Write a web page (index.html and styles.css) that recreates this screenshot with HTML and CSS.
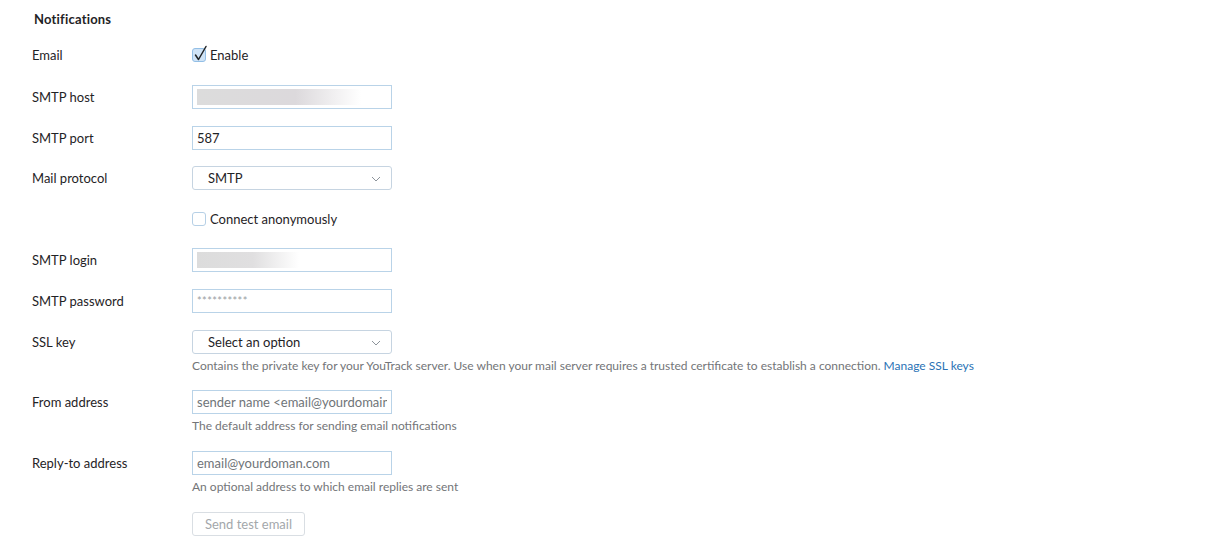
FILE: index.html
```
<!DOCTYPE html>
<html>
<head>
<meta charset="utf-8">
<link rel="stylesheet" href="styles.css">
</head>
<body>
<div class="page">
  <h2 class="title">Notifications</h2>
  <div class="form">
    <div class="row row-email">
      <div class="label">Email</div>
      <label class="check">
        <span class="box checked">
          <svg class="tick" width="16" height="18" viewBox="0 0 16 18"><path d="M3.5 10 L6.5 14.5 L14 1.5" fill="none" stroke="#1f2326" stroke-width="1.5" stroke-linecap="round" stroke-linejoin="round"/></svg>
        </span>
        <span>Enable</span>
      </label>
    </div>
    <div class="row">
      <div class="label">SMTP host</div>
      <div class="input"><span class="blur blur-long"></span></div>
    </div>
    <div class="row">
      <div class="label">SMTP port</div>
      <input class="input" type="text" value="587">
    </div>
    <div class="row">
      <div class="label">Mail protocol</div>
      <div class="select">SMTP<svg class="chev" width="10" height="6" viewBox="0 0 10 6"><path d="M1 1 L5 5 L9 1" fill="none" stroke="#8d949b" stroke-width="1"/></svg></div>
    </div>
    <div class="row">
      <div class="label"></div>
      <label class="check">
        <span class="box"></span>
        <span>Connect anonymously</span>
      </label>
    </div>
    <div class="row">
      <div class="label">SMTP login</div>
      <div class="input"><span class="blur blur-short"></span></div>
    </div>
    <div class="row">
      <div class="label">SMTP password</div>
      <input class="input stars" type="text" value="**********">
    </div>
    <div class="row">
      <div class="label">SSL key</div>
      <div class="field">
        <div class="select">Select an option<svg class="chev" width="10" height="6" viewBox="0 0 10 6"><path d="M1 1 L5 5 L9 1" fill="none" stroke="#8d949b" stroke-width="1"/></svg></div>
        <div class="help">Contains the private key for your YouTrack server. Use when your mail server requires a trusted certificate to establish a connection. <a class="link">Manage SSL keys</a></div>
      </div>
    </div>
    <div class="row">
      <div class="label">From address</div>
      <div class="field">
        <input class="input" type="text" placeholder="sender name &lt;email@yourdomain.com&gt;">
        <div class="help">The default address for sending email notifications</div>
      </div>
    </div>
    <div class="row">
      <div class="label">Reply-to address</div>
      <div class="field">
        <input class="input" type="text" placeholder="email@yourdoman.com">
        <div class="help">An optional address to which email replies are sent</div>
      </div>
    </div>
    <div class="row">
      <div class="label"></div>
      <button class="btn" disabled>Send test email</button>
    </div>
  </div>
</div>
</body>
</html>
```
FILE: styles.css
```
* { box-sizing: border-box; }
html, body { margin: 0; padding: 0; background: #fff; }
body {
  font-family: "Lato", "Open Sans", sans-serif;
  font-size: 13px;
  color: #1f2326;
}
.page { padding: 10px 32px 0; }
.title {
  margin: 0 0 0 2px;
  font-size: 13px;
  font-weight: 700;
  line-height: 18px;
  color: #1f2326;
  letter-spacing: 0.2px;
}
.form {
  margin-top: 14px;
  display: flex;
  flex-direction: column;
  gap: 16.8px;
}
.row { display: flex; align-items: flex-start; }
.row-email { height: 26px; align-items: center; }
.label {
  width: 160px;
  flex: none;
  line-height: 24px;
  height: 24px;
}
.row-email .label { line-height: 26px; height: 26px; }
.field { display: flex; flex-direction: column; }
.input {
  width: 200px;
  height: 24px;
  margin: 0;
  border: 1px solid #b9d3e8;
  border-radius: 0;
  padding: 0 4px;
  font-family: inherit;
  font-size: 13px;
  color: #1f2326;
  background: #fff;
  outline: none;
  line-height: 22px;
  white-space: nowrap;
  overflow: hidden;
  display: flex;
  align-items: center;
}
.input::placeholder { color: #6f7478; opacity: 1; }
.stars { color: #9a9ea2; font-size: 11px; letter-spacing: 0.4px; }
.blur {
  display: block;
  height: 16px;
  background: linear-gradient(90deg, #dcdcdc 0%, #dcd9dc 60%, #ffffff 100%);
}
.blur-long { width: 164px; }
.blur-short { width: 102px; background: linear-gradient(90deg, #dcdcdc 0%, #e0dfe0 55%, #ffffff 100%); }
.select {
  position: relative;
  width: 200px;
  height: 24px;
  border: 1px solid #c6d4e1;
  border-radius: 3px;
  padding: 0 15px;
  line-height: 22px;
}
.chev { position: absolute; right: 10px; top: 9px; }
.check {
  display: flex;
  align-items: center;
  gap: 4px;
  height: 24px;
  line-height: 24px;
}
.box {
  position: relative;
  width: 14px;
  height: 14px;
  border: 1px solid #b6d0e6;
  border-radius: 3px;
  background: #fff;
  flex: none;
}
.box.checked { background: #cfe3f6; border-color: #93bfe6; }
.tick { position: absolute; left: -1px; top: -4px; }
.help {
  margin-top: 4px;
  font-size: 12px;
  line-height: 16px;
  color: #737578;
  white-space: nowrap;
}
.link { color: #2a72b5; text-decoration: none; }
.btn {
  font-family: inherit;
  font-size: 13px;
  width: 113px;
  height: 24px;
  padding: 0;
  border: 1px solid #d9dee3;
  border-radius: 3px;
  background: #fff;
  color: #a3a7ab;
  line-height: 22px;
}
```
